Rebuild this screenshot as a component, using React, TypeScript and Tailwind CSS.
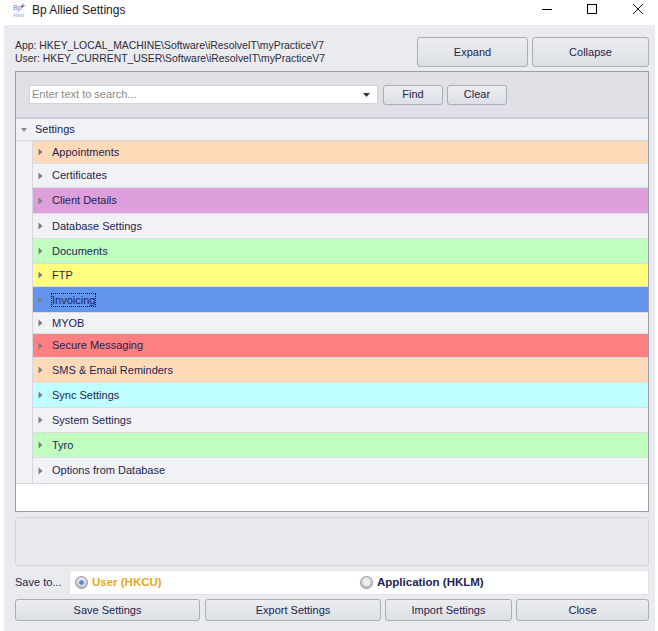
const rows = [
  { label: 'Appointments', cls: 'h-[23px] bg-[#ffdab9]' },
  { label: 'Certificates', cls: 'h-[24px] bg-[#f0f2f5]' },
  { label: 'Client Details', cls: 'h-[26px] bg-[#dda0dd]' },
  { label: 'Database Settings', cls: 'h-[25px] bg-[#f0f2f5]' },
  { label: 'Documents', cls: 'h-[25px] bg-[#c0ffc0]' },
  { label: 'FTP', cls: 'h-[23px] bg-[#ffff80]' },
  { label: 'Invoicing', cls: 'h-[26px] bg-[#6495ed]', focused: true },
  { label: 'MYOB', cls: 'h-[21px] bg-[#f0f2f5]' },
  { label: 'Secure Messaging', cls: 'h-[24px] bg-[#ff8080]' },
  { label: 'SMS & Email Reminders', cls: 'h-[25px] bg-[#ffdab9]' },
  { label: 'Sync Settings', cls: 'h-[25px] bg-[#c0ffff]' },
  { label: 'System Settings', cls: 'h-[25px] bg-[#f0f2f5]' },
  { label: 'Tyro', cls: 'h-[25px] bg-[#c0ffc0]' },
  { label: 'Options from Database', cls: 'h-[25px] bg-[#f0f2f5]' },
];

const btn =
  'rounded-[3px] border border-[#a9adb5] bg-gradient-to-b from-[#eceef1] to-[#dcdfe4] text-[#1e1e50] flex items-center justify-center';

function Caret() {
  return (
    <svg width="5" height="8" viewBox="0 0 5 8" className="shrink-0">
      <path d="M0.5 0.5 L4.5 4 L0.5 7.5 Z" fill="#7d7d7d" />
    </svg>
  );
}

function Radio({ checked }: { checked?: boolean }) {
  return (
    <span className="flex h-[13px] w-[13px] items-center justify-center rounded-full border border-[#8f939b] bg-gradient-to-b from-[#e4e4e8] to-[#b9bcc4]">
      <span
        className={
          checked
            ? 'h-[7px] w-[7px] rounded-full border border-white bg-[#5f86d8]'
            : 'h-[7px] w-[7px] rounded-full bg-[#eeeeee]'
        }
      />
    </span>
  );
}

export default function App() {
  return (
    <div className="h-[631px] w-[658px] overflow-hidden bg-white font-['Liberation_Sans',sans-serif] text-[11px] text-[#1e1e50]">
      {/* title bar */}
      <div className="flex h-[25px] items-center pl-[13px]">
        <svg width="14" height="17" viewBox="0 0 14 17" className="mb-[4px] shrink-0">
          <path d="M8 4 L11 1 L10 4 L13 3 L9 6 Z" fill="#6f6f6f" />
          <text x="0" y="8" fontSize="7" fill="#5b86c9" fontFamily="Liberation Sans">Bp</text>
          <text x="0" y="15" fontSize="4.5" fill="#8fb0dc" fontFamily="Liberation Sans">Allied</text>
        </svg>
        <span className="mb-[5px] ml-[5px] text-[12px] text-[#1a1a1a]">Bp Allied Settings</span>
        <div className="ml-auto mr-[15px] flex items-center pb-[7px]">
          <svg width="10" height="10" viewBox="0 0 10 10">
            <path d="M0 5.5 H10" stroke="#000" strokeWidth="1" />
          </svg>
          <svg width="10" height="10" viewBox="0 0 10 10" className="ml-[35px]">
            <rect x="0.5" y="0.5" width="9" height="9" fill="none" stroke="#000" strokeWidth="1" />
          </svg>
          <svg width="10" height="10" viewBox="0 0 10 10" className="ml-[36px]">
            <path d="M0 0 L10 10 M10 0 L0 10" stroke="#000" strokeWidth="0.9" />
          </svg>
        </div>
      </div>

      {/* form body */}
      <div className="ml-[4px] mr-[3px] flex h-[606px] flex-col bg-[#eaebef] pl-[11px] pr-[6px] pt-[12px]">
        <div className="flex h-[30px] items-center justify-between">
          <div className="text-[10.4px] leading-[13px] text-[#2a2a3a]">
            <div>App: HKEY_LOCAL_MACHINE\Software\iResolveIT\myPracticeV7</div>
            <div>User: HKEY_CURRENT_USER\Software\iResolveIT\myPracticeV7</div>
          </div>
          <div className="flex gap-[4px]">
            <button className={`${btn} h-[30px] w-[111px]`}>Expand</button>
            <button className={`${btn} h-[30px] w-[117px]`}>Collapse</button>
          </div>
        </div>

        {/* tree panel */}
        <div className="mt-[4px] flex h-[441px] flex-col border border-[#9a9ea8] bg-white">
          <div className="flex h-[47px] items-center border-b-2 border-[#cdd0d8] bg-[#dfe1e6] pl-[13px]">
            <div className="flex h-[19px] w-[349px] items-center justify-between border border-[#d0d3d9] bg-white pl-[2px] pr-[7px] text-[#8a8a8a]">
              <span>Enter text to search...</span>
              <svg width="7" height="4" viewBox="0 0 7 4">
                <path d="M0 0 H7 L3.5 4 Z" fill="#333" />
              </svg>
            </div>
            <button className={`${btn} ml-[5px] h-[20px] w-[60px]`}>Find</button>
            <button className={`${btn} ml-[4px] h-[20px] w-[60px]`}>Clear</button>
          </div>
          <div className="flex h-[22px] items-center border-b border-[#d5d7de] bg-[#f0f2f5]">
            <svg width="6" height="4" viewBox="0 0 6 4" className="ml-[5px]">
              <path d="M0 0 H6 L3 4 Z" fill="#8a8a8a" />
            </svg>
            <span className="ml-[8px]">Settings</span>
          </div>
          <div className="border-b border-[#d5d7de] bg-[#f0f2f5] pl-[16px]">
            <div className="border-l border-[#d5d7de]">
              {rows.map((row) => (
                <div
                  key={row.label}
                  className={`${row.cls} flex items-center border-b border-[#dcdee4] pl-[5px] last:border-b-0`}
                >
                  <Caret />
                  <span
                    className={
                      row.focused
                        ? 'ml-[8px] border border-dotted border-black leading-[12px]'
                        : 'ml-[9px]'
                    }
                  >
                    {row.label}
                  </span>
                </div>
              ))}
            </div>
          </div>
        </div>

        {/* description panel */}
        <div className="mt-[5px] h-[49px] rounded-[3px] border border-[#d3d5db] bg-[#e9eaee]" />

        {/* save to */}
        <div className="mt-[4px] flex h-[25px] items-center">
          <span className="w-[54px]">Save to...</span>
          <div className="flex h-[25px] flex-1 items-center border border-[#e0e2e6] bg-white text-[11.5px] font-bold">
            <div className="flex w-[290px] items-center gap-[4px] pl-[5px] text-[#e5a823]">
              <Radio checked />
              <span>User (HKCU)</span>
            </div>
            <div className="flex items-center gap-[4px]">
              <Radio />
              <span>Application (HKLM)</span>
            </div>
          </div>
        </div>

        {/* bottom buttons */}
        <div className="mt-[4px] flex">
          <button className={`${btn} h-[22px] w-[185px]`}>Save Settings</button>
          <button className={`${btn} ml-[5px] h-[22px] w-[176px]`}>Export Settings</button>
          <button className={`${btn} ml-[4px] h-[22px] w-[127px]`}>Import Settings</button>
          <button className={`${btn} ml-[4px] h-[22px] w-[133px]`}>Close</button>
        </div>
      </div>
    </div>
  );
}
